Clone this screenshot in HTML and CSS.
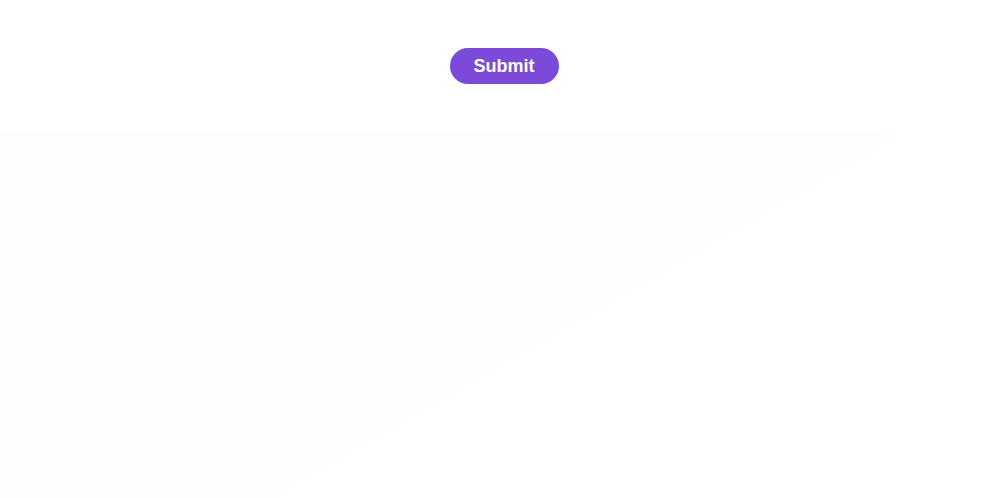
FILE: index.html
```html
<!DOCTYPE html>
<html>
<head>
<meta charset="utf-8">
<link rel="stylesheet" href="styles.css">
</head>
<body>
<div class="page">
  <div class="top">
    <button class="submit" type="button">Submit</button>
  </div>
  <div class="lower"></div>
</div>
</body>
</html>
```
FILE: styles.css
```css
html, body {
  margin: 0;
  padding: 0;
  height: 100%;
  background: #ffffff;
  font-family: "Liberation Sans", Arial, sans-serif;
}
.page {
  height: 100%;
  display: flex;
  flex-direction: column;
}
.top {
  height: 132px;
  display: flex;
  justify-content: center;
  align-items: flex-start;
  padding-top: 48px;
  box-sizing: border-box;
}
.submit {
  background: #7b4ad8;
  color: #ffffff;
  border: none;
  border-radius: 18px;
  height: 36px;
  padding: 0 24px;
  font-family: "Liberation Sans", Arial, sans-serif;
  font-weight: 700;
  font-size: 18px;
  line-height: 36px;
  cursor: pointer;
}
.lower {
  flex: 1;
  background: linear-gradient(150deg, #fdfdfd 0%, #fdfdfd 51%, #ffffff 57%);
}
```
